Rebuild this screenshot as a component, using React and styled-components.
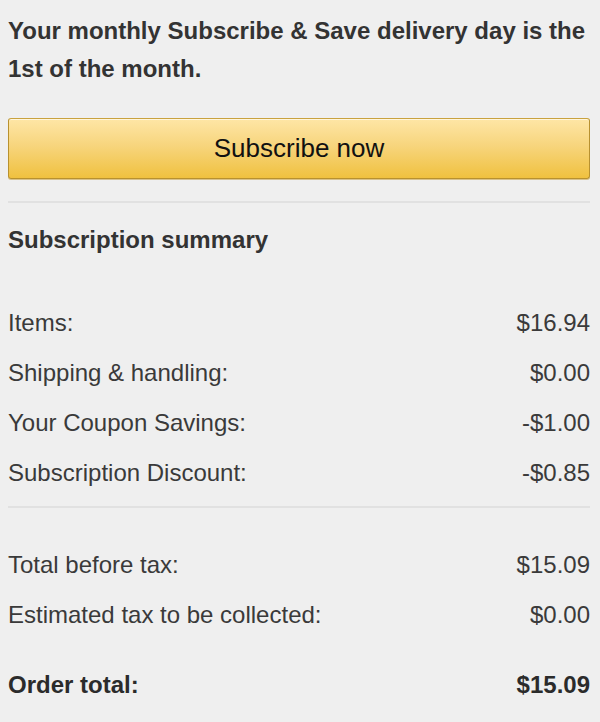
import styled, { createGlobalStyle } from "styled-components";

const GlobalStyle = createGlobalStyle`
  html, body {
    margin: 0;
    padding: 0;
    background: #efefef;
  }
  body {
    font-family: "Liberation Sans", Arial, sans-serif;
    color: #333;
  }
`;

const Page = styled.div`
  padding: 12px 10px 0 8px;
  min-height: 722px;
  box-sizing: border-box;
`;

const Notice = styled.p`
  margin: 0;
  font-size: 24px;
  font-weight: bold;
  line-height: 38px;
  color: #333;
`;

const SubscribeButton = styled.button`
  display: flex;
  align-items: center;
  justify-content: center;
  width: 100%;
  height: 61px;
  margin-top: 30px;
  padding: 0;
  font-family: inherit;
  font-size: 26px;
  color: #111;
  border: 1px solid #b8912f;
  border-top-color: #c9a23e;
  border-radius: 3px;
  background: linear-gradient(to bottom, #fee6a6 0%, #f7d57d 45%, #f0c13f 100%);
  box-shadow: inset 0 1px 0 rgba(255, 255, 255, 0.6), 0 1px 0 #d9c28a;
  cursor: pointer;
`;

const Divider = styled.div`
  height: 2px;
  background: #e1e1e1;
  margin-top: ${(p) => p.$top}px;
`;

const SectionTitle = styled.h2`
  margin: 22px 0 0;
  font-size: 24px;
  font-weight: bold;
  line-height: 30px;
  color: #333;
`;

const Rows = styled.div`
  margin-top: ${(p) => p.$top}px;
`;

const Row = styled.div`
  display: flex;
  justify-content: space-between;
  height: 50px;
  line-height: 50px;
  font-size: 24px;
  font-weight: ${(p) => (p.$strong ? "bold" : "normal")};
  color: ${(p) => (p.$strong ? "#2b2b2b" : "#3a3a3a")};
  margin-top: ${(p) => p.$gap || 0}px;
`;

const summary = [
  ["Items:", "$16.94"],
  ["Shipping & handling:", "$0.00"],
  ["Your Coupon Savings:", "-$1.00"],
  ["Subscription Discount:", "-$0.85"],
];

const totals = [
  ["Total before tax:", "$15.09"],
  ["Estimated tax to be collected:", "$0.00"],
];

export default function App() {
  return (
    <>
      <GlobalStyle />
      <Page>
        <Notice>
          Your monthly Subscribe &amp; Save delivery day is the 1st of the month.
        </Notice>
        <SubscribeButton>Subscribe now</SubscribeButton>
        <Divider $top={22} />
        <SectionTitle>Subscription summary</SectionTitle>
        <Rows $top={43}>
          {summary.map(([label, value]) => (
            <Row key={label}>
              <span>{label}</span>
              <span>{value}</span>
            </Row>
          ))}
        </Rows>
        <Divider $top={8} />
        <Rows $top={32}>
          {totals.map(([label, value]) => (
            <Row key={label}>
              <span>{label}</span>
              <span>{value}</span>
            </Row>
          ))}
          <Row $strong $gap={20}>
            <span>Order total:</span>
            <span>$15.09</span>
          </Row>
        </Rows>
      </Page>
    </>
  );
}
